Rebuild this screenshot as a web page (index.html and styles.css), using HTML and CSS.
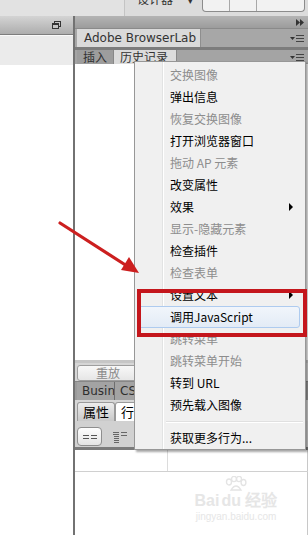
FILE: index.html
```html
<!DOCTYPE html>
<html lang="zh-CN">
<head>
    <meta charset="UTF-8">
    <title>行为面板</title>
    <link rel="stylesheet" href="styles.css">
</head>
<body>
<div class="app">
    <div class="topbar">
        <div class="top-left"></div>
        <div class="top-mode">设计器 <span class="caret">▾</span></div>
        <div class="top-seg"><span></span><span></span><span></span></div>
    </div>

    <div class="main">
        <div class="left">
            <div class="left-head">
                <svg class="restore" width="9" height="8" viewBox="0 0 9 8">
                    <rect x="2.5" y="0.5" width="6" height="5" fill="none" stroke="#333"/>
                    <rect x="0.5" y="2.5" width="6" height="5" fill="#c4c4c4" stroke="#333"/>
                    <line x1="0.5" y1="3.5" x2="6.5" y2="3.5" stroke="#333"/>
                </svg>
            </div>
            <div class="left-sub"></div>
            <div class="left-body"></div>
        </div>
        <div class="split"></div>
        <div class="right">
            <div class="dock-head">
                <svg class="expand" width="8" height="7" viewBox="0 0 8 7">
                    <path d="M0 0 L4 3.5 L0 7 Z M4 0 L8 3.5 L4 7 Z" fill="#333"/>
                </svg>
            </div>
            <div class="tabrow tabrow-a">
                <div class="tab active">Adobe BrowserLab</div>
                <svg class="panel-menu" width="14" height="8" viewBox="0 0 14 8">
                    <path d="M0 3 L5 3 L2.5 6 Z" fill="#333"/>
                    <path d="M6 1.5 H14 M6 4.5 H14 M6 7.5 H14" stroke="#444"/>
                </svg>
            </div>
            <div class="tabrow tabrow-b">
                <div class="tab">插入</div>
                <div class="tab active">历史记录</div>
                <svg class="panel-menu" width="14" height="8" viewBox="0 0 14 8">
                    <path d="M0 3 L5 3 L2.5 6 Z" fill="#333"/>
                    <path d="M6 1.5 H14 M6 4.5 H14 M6 7.5 H14" stroke="#444"/>
                </svg>
            </div>
            <div class="history"></div>
            <div class="replay-bar"><button class="replay">重放</button></div>
            <div class="tabrow tabrow-c">
                <div class="tab">Busin</div>
                <div class="tab">CSS样式</div>
            </div>
            <div class="tabrow tabrow-d">
                <div class="tab">属性</div>
                <div class="tab active">行为</div>
            </div>
            <div class="toolbar">
                <span class="tool on">
                    <svg width="16" height="6" viewBox="0 0 16 6">
                        <path d="M1 1.5 H7 M1 4.5 H7 M9 1.5 H15 M9 4.5 H15" stroke="#555"/>
                    </svg>
                </span>
                <span class="tool">
                    <svg width="16" height="12" viewBox="0 0 16 12">
                        <path d="M1 1.5 H7 M1 3.5 H7 M2 5.5 H7 M2 7.5 H7 M2 9.5 H7 M2 11.5 H7 M9 1.5 H15 M9 4.5 H15" stroke="#666"/>
                    </svg>
                </span>
            </div>
            <div class="grid-head"><div class="col1"></div><div class="col2"></div></div>
            <div class="grid-body"></div>
        </div>
    </div>

    <ul class="menu">
        <li class="off">交换图像</li>
        <li>弹出信息</li>
        <li class="off">恢复交换图像</li>
        <li>打开浏览器窗口</li>
        <li class="off">拖动 AP 元素</li>
        <li>改变属性</li>
        <li class="sub">效果</li>
        <li class="off">显示-隐藏元素</li>
        <li>检查插件</li>
        <li class="off">检查表单</li>
        <li class="sub">设置文本</li>
        <li class="hover">调用JavaScript</li>
        <li class="off">跳转菜单</li>
        <li class="off">跳转菜单开始</li>
        <li>转到 URL</li>
        <li>预先载入图像</li>
        <li class="sep"></li>
        <li>获取更多行为...</li>
    </ul>

    <div class="callout"></div>

    <svg class="arrow" width="308" height="535" viewBox="0 0 308 535">
        <line x1="60" y1="223" x2="127" y2="266" stroke="#cc1f1f" stroke-width="3.2" stroke-linecap="round"/>
        <polygon points="139,273 121,270 129,257" fill="#cc1f1f"/>
    </svg>

    <div class="watermark">
        <svg class="paw" width="22" height="16" viewBox="0 0 22 16">
            <g fill="none" stroke="#e4e4e4" stroke-width="1.4">
                <ellipse cx="4" cy="6" rx="2.5" ry="3"/>
                <ellipse cx="9" cy="3" rx="2.5" ry="2.6"/>
                <ellipse cx="14" cy="3" rx="2.5" ry="2.6"/>
                <ellipse cx="18.5" cy="6.5" rx="2.4" ry="3"/>
                <path d="M6 14 Q11 6 16 14 Z"/>
            </g>
        </svg>
        <div class="wm-logo">Bai<span class="du">du</span> 经验</div>
        <div class="wm-url">jingyan.baidu.com</div>
    </div>
</div>
</body>
</html>
```

FILE: styles.css
```css
* {
    margin: 0;
    padding: 0;
    box-sizing: border-box;
}

body {
    width: 308px;
    height: 535px;
    overflow: hidden;
    background: #fff;
    font-family: "Noto Sans CJK SC", "Noto Sans", sans-serif;
    font-size: 12px;
    color: #111;
}

.app {
    position: relative;
    width: 308px;
    height: 535px;
    overflow: hidden;
}

/* top strip */
.topbar {
    height: 16px;
    display: flex;
    background: #dcdcdc;
    overflow: hidden;
}

.top-left {
    width: 125px;
    border-right: 1px solid #c4c4c4;
    background: #e2e2e2;
}

.top-mode {
    width: 77px;
    padding-left: 12px;
    margin-top: -9px;
    color: #333;
    line-height: 16px;
}

.top-mode .caret {
    margin-left: 12px;
    font-size: 9px;
}

.top-seg {
    display: flex;
    width: 103px;
    height: 12px;
    border: 1px solid #8c8c8c;
    border-top: none;
    border-radius: 0 0 4px 4px;
    background: #f2f2f2;
}

.top-seg span {
    flex: 1;
    border-right: 1px solid #a8a8a8;
}

.top-seg span:last-child {
    border-right: none;
    flex: 1.8;
}

/* main area */
.main {
    display: flex;
    height: 519px;
}

.left {
    width: 73px;
    display: flex;
    flex-direction: column;
}

.left-head {
    height: 19px;
    background: linear-gradient(#d4d4d4, #adadad);
    border-bottom: 1px solid #7d7d7d;
    display: flex;
    justify-content: flex-end;
    align-items: center;
    padding-right: 12px;
}

.left-sub {
    height: 30px;
    background: #ebebeb;
    border-top: 1px solid #fafafa;
}

.left-body {
    flex: 1;
    background: #fff;
}

.split {
    width: 2px;
    background: #727272;
}

.right {
    flex: 1;
    display: flex;
    flex-direction: column;
    min-width: 0;
}

.dock-head {
    height: 12px;
    background: linear-gradient(#b4b4b4, #9c9c9c);
    display: flex;
    justify-content: flex-end;
    align-items: center;
    padding-right: 4px;
}

.tabrow {
    display: flex;
    align-items: flex-end;
    padding-left: 2px;
    position: relative;
    overflow: hidden;
}

.tab {
    white-space: nowrap;
    color: #333;
}

.panel-menu {
    position: absolute;
    right: 4px;
    top: 50%;
    margin-top: -4px;
}

.tabrow-a {
    height: 19px;
    background: #a7a7a7;
    border-top: 1px solid #8a8a8a;
}

.tabrow-a .tab {
    width: 124px;
    height: 18px;
    line-height: 18px;
    padding-left: 7px;
    background: #dadada;
    border-right: 1px solid #8e8e8e;
    font-family: "DejaVu Sans", sans-serif;
    font-size: 12px;
}

.tabrow-b {
    height: 17px;
    background: #a4a4a4;
    border-top: 3px solid #7c7c7c;
}

.tabrow-b .tab {
    height: 14px;
    line-height: 14px;
    padding: 0 6px;
    background: #9d9d9d;
    border-right: 1px solid #888;
}

.tabrow-b .tab.active {
    background: #dcdcdc;
    width: 63px;
}

.history {
    height: 296px;
    background: #fff;
}

.replay-bar {
    height: 21px;
    background: #d6d6d6;
    border-top: 3px solid #c6c6c6;
    padding: 1px 0 0 2px;
}

.replay {
    width: 80px;
    height: 16px;
    border: 1px solid #9e9e9e;
    border-radius: 3px;
    background: linear-gradient(#f8f8f8, #e6e6e6);
    font-family: inherit;
    font-size: 12px;
    line-height: 14px;
    color: #8a8a8a;
    padding-left: 18px;
    text-align: left;
}

.tabrow-c {
    height: 19px;
    background: #9b9b9b;
    border-top: 1px solid #878787;
    align-items: stretch;
}

.tabrow-c .tab {
    font-family: "DejaVu Sans", sans-serif;
    font-size: 12px;
    line-height: 18px;
    padding: 0 5px;
    border-right: 1px solid #6e6e6e;
    background: #a3a3a3;
    color: #2e2e2e;
}

.tabrow-c .tab:first-child {
    width: 38px;
    overflow: hidden;
}

.tabrow-d {
    height: 21px;
    background: #d7d7d7;
    align-items: flex-end;
}

.tabrow-d .tab {
    height: 19px;
    line-height: 18px;
    padding: 0 5px;
    font-size: 13px;
    color: #000;
    border: 1px solid #9a9a9a;
    border-bottom: none;
    border-radius: 3px 3px 0 0;
    background: linear-gradient(#ececec, #c9c9c9);
}

.tabrow-d .tab.active {
    background: #fff;
}

.toolbar {
    height: 26px;
    background: #d1d1d1;
    display: flex;
    align-items: flex-start;
    gap: 5px;
    padding: 6px 0 0 2px;
}

.tool {
    width: 25px;
    height: 19px;
    display: flex;
    align-items: center;
    justify-content: center;
}

.tool.on {
    background: linear-gradient(#fdfdfd, #e4e4e4);
    border: 1px solid #8e8e8e;
    border-radius: 4px;
}

.grid-head {
    height: 25px;
    display: flex;
    border-top: 3px solid #7b7b7b;
    border-bottom: 1px solid #d0d0d0;
    background: #fff;
}

.col1 {
    width: 93px;
    border-right: 1px solid #dcdcdc;
}

.col2 {
    flex: 1;
    border-right: 1px solid #c8c8c8;
}

.grid-body {
    flex: 1;
    background: #fff;
    border-right: 1px solid #c8c8c8;
}

/* popup menu */
.menu {
    position: absolute;
    left: 134px;
    top: 61px;
    width: 172px;
    height: 389px;
    list-style: none;
    padding: 2px 2px 1px 2px;
    background: #f0f0f0 linear-gradient(to right, transparent 27px, #e2e3e3 27px, #e2e3e3 28px, #fff 28px, #fff 29px, transparent 29px);
    border: 1px solid #979797;
    box-shadow: 2px 2px 2px rgba(0, 0, 0, 0.35);
}

.menu li {
    height: 22px;
    line-height: 22px;
    padding-left: 33px;
    color: #000;
    position: relative;
}

.menu li.off {
    color: #8d8d8d;
}

.menu li.sub::after {
    content: "";
    position: absolute;
    right: 10px;
    top: 7px;
    border-left: 4px solid #000;
    border-top: 4px solid transparent;
    border-bottom: 4px solid transparent;
}

.menu li.hover {
    margin-right: 3px;
    background: linear-gradient(#f1f5fb, #e3ebf6);
    border: 1px solid #aecbef;
    border-radius: 3px;
    line-height: 20px;
    padding-left: 32px;
}

.menu li.sep {
    height: 11px;
    margin-left: 29px;
    background: linear-gradient(transparent 5px, #e0e0e0 5px, #e0e0e0 6px, #fff 6px, #fff 7px, transparent 7px);
}

/* annotation overlays */
.callout {
    position: absolute;
    left: 137px;
    top: 289px;
    width: 170px;
    height: 48px;
    border: 4px solid #c4161c;
}

.arrow {
    position: absolute;
    left: 0;
    top: 0;
    pointer-events: none;
}

.watermark {
    position: absolute;
    left: 184px;
    top: 476px;
    width: 104px;
    display: flex;
    flex-direction: column;
    align-items: center;
    white-space: nowrap;
    color: #e6e6e6;
    font-family: "Liberation Sans", sans-serif;
}

.wm-logo {
    font-size: 16px;
    font-weight: bold;
    line-height: 18px;
}

.du {
    margin-left: 2px;
}

.wm-url {
    font-size: 10px;
    line-height: 14px;
}
```
